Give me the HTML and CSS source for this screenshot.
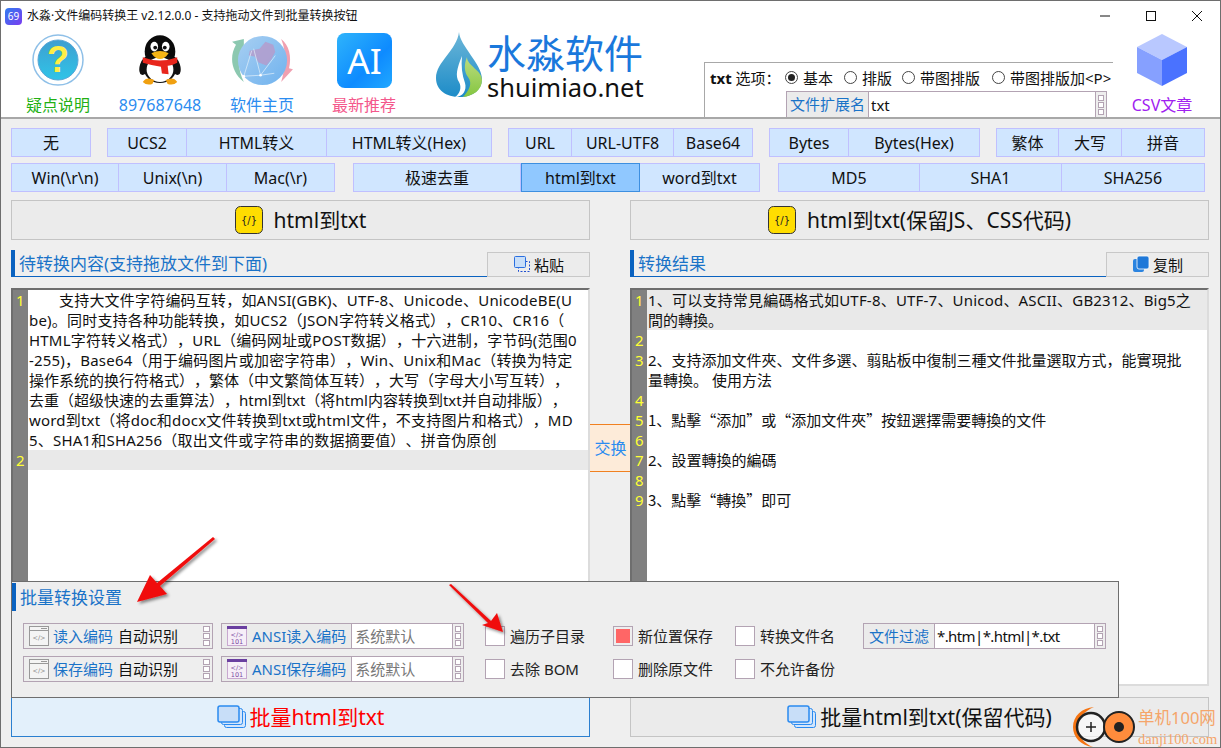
FILE: index.html
```html
<!DOCTYPE html>
<html lang="zh-CN">
<head>
    <meta charset="UTF-8">
    <title>水淼·文件编码转换王</title>
    <link rel="stylesheet" href="styles.css">
</head>
<body>
<div class="window">
    <div class="titlebar">
        <span class="app-icon">69</span>
        <span class="app-title">水淼·文件编码转换王 v2.12.0.0 - 支持拖动文件到批量转换按钮</span>
        <div class="win-controls">
            <svg width="12" height="12" viewBox="0 0 12 12"><path d="M1 6h10" stroke="#111" fill="none"/></svg>
            <svg width="12" height="12" viewBox="0 0 12 12"><rect x="1.5" y="1.5" width="9" height="9" stroke="#111" fill="none"/></svg>
            <svg width="12" height="12" viewBox="0 0 12 12"><path d="M1 1l10 10M11 1L1 11" stroke="#111" fill="none"/></svg>
        </div>
    </div>

    <div class="header">
        <div class="tool">
            <div class="tool-icon">
                <svg width="52" height="52" viewBox="0 0 52 52">
                    <defs><linearGradient id="qBlue" x1="0" y1="0" x2="0" y2="1"><stop offset="0" stop-color="#3f9fd0"/><stop offset="1" stop-color="#2fc4e8"/></linearGradient></defs>
                    <circle cx="26" cy="26" r="25" fill="#fff" stroke="#8fc0e8" stroke-width="1.5"/>
                    <circle cx="26" cy="26" r="20" fill="url(#qBlue)" stroke="#5aa6d8"/>
                    <text x="26" y="38" class="q-mark">?</text>
                </svg>
            </div>
            <span class="tool-label green">疑点说明</span>
        </div>
        <div class="tool">
            <div class="tool-icon">
                <svg width="44" height="52" viewBox="0 0 46 54">
                    <ellipse cx="7" cy="33" rx="5" ry="10" fill="#111" transform="rotate(18 7 33)"/>
                    <ellipse cx="39" cy="33" rx="5" ry="10" fill="#111" transform="rotate(-18 39 33)"/>
                    <ellipse cx="23" cy="18" rx="16" ry="17" fill="#0a0a0a"/>
                    <ellipse cx="23" cy="36" rx="17" ry="15" fill="#111"/>
                    <ellipse cx="23" cy="37" rx="14" ry="13" fill="#fff"/>
                    <ellipse cx="17" cy="13" rx="4" ry="5" fill="#fff"/>
                    <ellipse cx="29" cy="13" rx="4" ry="5" fill="#fff"/>
                    <circle cx="18" cy="14" r="2" fill="#111"/>
                    <circle cx="28" cy="14" r="2" fill="#111"/>
                    <path d="M14 20q9-5 18 0q-4 6-9 6t-9-6z" fill="#f5b516"/>
                    <path d="M5 24q18 7 36 0l0 6q-6 3-10 3l1 9-7-1-1-7q-9-1-19-4z" fill="#e8261c"/>
                    <path d="M5 50q4-6 12-2l-2 4q-6 2-10-2zM41 50q-4-6-12-2l2 4q6 2 10-2z" fill="#f0a010"/>
                </svg>
            </div>
            <span class="tool-label blue">897687648</span>
        </div>
        <div class="tool">
            <div class="tool-icon">
                <svg width="65" height="55" viewBox="0 0 66 56">
                    <defs><linearGradient id="globe" x1="0" y1="0" x2="1" y2="1"><stop offset="0" stop-color="#a8cff2"/><stop offset="1" stop-color="#6fb2ee"/></linearGradient></defs>
                    <path d="M14 6L2 9l4 3C-1 24 1 40 14 50 8 38 7 24 14 13z" fill="#8cc8b0"/>
                    <path d="M52 6c8 6 11 18 8 30l4 1-12 13c4-14 6-30 0-44z" fill="#f0a0b0"/>
                    <circle cx="33" cy="28" r="25" fill="url(#globe)"/>
                    <path d="M20 18l10-2 6-7 8 3 2 7-4 8-5 6-8-3-4-6-6-1z" fill="#b49ccc" opacity=".85"/>
                    <path d="M14 44l17-1 14-2M31 43l15-20M14 44l8-26M31 43L24 16" stroke="#e4f0fb" fill="none" stroke-width=".7"/>
                    <circle cx="14" cy="44" r="1.3" fill="#fff"/><circle cx="31" cy="43" r="1.3" fill="#fff"/>
                </svg>
            </div>
            <span class="tool-label blue">软件主页</span>
        </div>
        <div class="tool">
            <div class="tool-icon">
                <svg width="55" height="55" viewBox="0 0 56 56">
                    <defs><linearGradient id="aiTile" x1="0" y1="0" x2="1" y2="1"><stop offset="0" stop-color="#2fb4fb"/><stop offset=".6" stop-color="#0e8bff"/><stop offset="1" stop-color="#21a8ff"/></linearGradient></defs>
                    <rect width="56" height="56" rx="8" fill="url(#aiTile)"/>
                    <text x="28" y="42" class="ai-mark">AI</text>
                </svg>
            </div>
            <span class="tool-label pink">最新推荐</span>
        </div>

        <div class="logo">
            <svg width="48" height="66" viewBox="0 0 48 66">
                <defs>
                    <linearGradient id="dropBlue" x1="0" y1="0" x2="0" y2="1"><stop offset="0" stop-color="#6cb6d8"/><stop offset="1" stop-color="#1d8cc8"/></linearGradient>
                    <linearGradient id="dropGreen" x1="0" y1="0" x2="0" y2="1"><stop offset="0" stop-color="#bcdc80"/><stop offset="1" stop-color="#84c640"/></linearGradient>
                </defs>
                <path d="M24 0C25 14 47 32 47 47C47 58 37 65 25 65C11 65 1 58 1 46C1 30 22 18 24 0Z" fill="url(#dropBlue)"/>
                <path d="M32 25C32 34 47 38 47 48C47 58 38 64 28 65C34 58 38 52 33 45C29 40 29 32 32 25Z" fill="url(#dropGreen)"/>
                <path d="M27 24C22 36 20 44 24 50C27 55 25 62 20 65C28 65 32 58 30 51C27 43 26 34 27 24Z" fill="#fff"/>
            </svg>
            <div class="logo-text">
                <span class="logo-cn">水淼软件</span>
                <span class="logo-en">shuimiao.net</span>
            </div>
        </div>

        <div class="options">
            <div class="options-row">
                <span class="options-title"><b>txt</b> 选项：</span>
                <label class="radio opt-basic"><span class="dot on"></span>基本</label>
                <label class="radio opt-layout"><span class="dot"></span>排版</label>
                <label class="radio opt-image"><span class="dot"></span>带图排版</label>
                <label class="radio"><span class="dot"></span>带图排版加&lt;P&gt;</label>
            </div>
            <div class="field ext-field">
                <span class="field-label">文件扩展名</span>
                <span class="field-input">txt</span>
                <span class="spin"><i></i><i></i><i></i></span>
            </div>
        </div>

        <div class="tool tool-csv">
            <div class="tool-icon">
                <svg width="52" height="54" viewBox="0 0 52 54">
                    <polygon points="26,1 51,14 26,27 1,14" fill="#b9c8ff"/>
                    <polygon points="1,14 26,27 26,53 1,40" fill="#86a0ff"/>
                    <polygon points="51,14 26,27 26,53 51,40" fill="#4a72ff"/>
                </svg>
            </div>
            <span class="tool-label purple">CSV文章</span>
        </div>
    </div>

    <div class="toolbar">
        <div class="tool-row row-one">
            <div class="seg"><button class="w80">无</button></div>
            <div class="seg"><button class="w80">UCS2</button><button class="w140">HTML转义</button><button class="w165">HTML转义(Hex)</button></div>
            <div class="seg"><button class="w64">URL</button><button class="w102">URL-UTF8</button><button class="w79">Base64</button></div>
            <div class="seg"><button class="w80">Bytes</button><button class="w131">Bytes(Hex)</button></div>
            <div class="seg"><button class="w63">繁体</button><button class="w63">大写</button><button class="w83">拼音</button></div>
        </div>
        <div class="tool-row row-two">
            <div class="seg"><button class="w108">Win(\r\n)</button><button class="w108">Unix(\n)</button><button class="w108">Mac(\r)</button></div>
            <div class="seg"><button class="w168">极速去重</button><button class="w119 active">html到txt</button><button class="w120">word到txt</button></div>
            <div class="seg"><button class="w142">MD5</button><button class="w142">SHA1</button><button class="w143">SHA256</button></div>
        </div>
    </div>

    <div class="main">
        <div class="pane">
            <div class="big-btn">
                <svg class="code-icon" width="28" height="28" viewBox="0 0 28 28"><rect x=".5" y=".5" width="27" height="27" rx="5" fill="#ffdd00" stroke="#333"/><text x="14" y="18" class="code-mark">{/}</text></svg>
                html到txt
            </div>
            <div class="pane-head">
                <span class="pane-title">待转换内容(支持拖放文件到下面)</span>
                <div class="small-btn">
                    <svg width="18" height="18" viewBox="0 0 18 18"><rect x="5.5" y="6.5" width="11" height="10" fill="none" stroke="#2050d0" stroke-dasharray="2 1.5"/><rect x="1.5" y="1.5" width="11" height="11" rx="1" fill="#c8def8" stroke="#2a6fe0"/></svg>
                    粘贴
                </div>
            </div>
            <div class="editor">
                <div class="row">
                    <span class="num">1</span>
                    <div class="txt">
                        <span class="indent wide">支持大文件字符编码互转，如ANSI(GBK)、UTF-8、Unicode、UnicodeBE(U</span>
                        <span class="wide">be)。同时支持各种功能转换，如UCS2（JSON字符转义格式），CR10、CR16（</span>
                        <span class="wide">HTML字符转义格式），URL（编码网址或POST数据），十六进制，字节码(范围0</span>
                        <span class="wide">-255)，Base64（用于编码图片或加密字符串），Win、Unix和Mac（转换为特定</span>
                        <span>操作系统的换行符格式），繁体（中文繁简体互转），大写（字母大小写互转），</span>
                        <span>去重（超级快速的去重算法），html到txt（将html内容转换到txt并自动排版），</span>
                        <span class="wide">word到txt（将doc和docx文件转换到txt或html文件，不支持图片和格式），MD</span>
                        <span class="wide">5、SHA1和SHA256（取出文件或字符串的数据摘要值）、拼音伪原创</span>
                    </div>
                </div>
                <div class="row current"><span class="num">2</span><div class="txt"><span>&nbsp;</span></div></div>
                <div class="row fill"><span class="num"></span><div class="txt"></div></div>
            </div>
            <div class="batch-btn primary">
                <svg class="stack-icon" width="30" height="24" viewBox="0 0 30 24"><rect x="7.5" y="6.5" width="21" height="16" rx="2" fill="#d4e6fb" stroke="#2a8af0"/><rect x="4.5" y="3.5" width="21" height="16" rx="2" fill="#d4e6fb" stroke="#2a8af0"/><rect x="1" y="1" width="21" height="16" rx="2" fill="#c8def8" stroke="#2a8af0" stroke-width="1.5"/></svg>
                批量html到txt
            </div>
        </div>

        <div class="mid"><div class="swap">交换</div></div>

        <div class="pane">
            <div class="big-btn">
                <svg class="code-icon" width="28" height="28" viewBox="0 0 28 28"><rect x=".5" y=".5" width="27" height="27" rx="5" fill="#ffdd00" stroke="#333"/><text x="14" y="18" class="code-mark">{/}</text></svg>
                html到txt(保留JS、CSS代码)
            </div>
            <div class="pane-head">
                <span class="pane-title">转换结果</span>
                <div class="small-btn">
                    <svg width="18" height="18" viewBox="0 0 18 18"><rect x="1" y="4" width="11" height="13" rx="2" fill="#2b84e0"/><rect x="5" y="1" width="12" height="13" rx="2" fill="#1f78d8" stroke="#fff" stroke-width=".8"/></svg>
                    复制
                </div>
            </div>
            <div class="editor">
                <div class="row current">
                    <span class="num">1</span>
                    <div class="txt">
                        <span class="wide">1、可以支持常見編碼格式如UTF-8、UTF-7、Unicod、ASCII、GB2312、Big5之</span>
                        <span>間的轉換。</span>
                    </div>
                </div>
                <div class="row"><span class="num">2</span><div class="txt"><span>&nbsp;</span></div></div>
                <div class="row">
                    <span class="num">3</span>
                    <div class="txt">
                        <span>2、支持添加文件夾、文件多選、翦貼板中復制三種文件批量選取方式，能實現批</span>
                        <span>量轉換。 使用方法</span>
                    </div>
                </div>
                <div class="row"><span class="num">4</span><div class="txt"><span>&nbsp;</span></div></div>
                <div class="row"><span class="num">5</span><div class="txt"><span class="han">1、點擊“添加”或“添加文件夾”按鈕選擇需要轉換的文件</span></div></div>
                <div class="row"><span class="num">6</span><div class="txt"><span>&nbsp;</span></div></div>
                <div class="row"><span class="num">7</span><div class="txt"><span>2、設置轉換的編碼</span></div></div>
                <div class="row"><span class="num">8</span><div class="txt"><span>&nbsp;</span></div></div>
                <div class="row"><span class="num">9</span><div class="txt"><span class="han">3、點擊“轉換”即可</span></div></div>
                <div class="row fill"><span class="num"></span><div class="txt"></div></div>
            </div>
            <div class="batch-btn">
                <svg class="stack-icon" width="30" height="24" viewBox="0 0 30 24"><rect x="7.5" y="6.5" width="21" height="16" rx="2" fill="#d4e6fb" stroke="#2a8af0"/><rect x="4.5" y="3.5" width="21" height="16" rx="2" fill="#d4e6fb" stroke="#2a8af0"/><rect x="1" y="1" width="21" height="16" rx="2" fill="#c8def8" stroke="#2a8af0" stroke-width="1.5"/></svg>
                批量html到txt(保留代码)
            </div>
        </div>
    </div>

    <!-- floats over the two editors -->
    <div class="batch-panel">
        <div class="batch-title">批量转换设置</div>
        <div class="batch-grid">
            <div class="field enc">
                <svg width="20" height="20" viewBox="0 0 20 20"><rect x=".5" y=".5" width="19" height="19" fill="#f4f4f4" stroke="#999"/><path d="M1 4.5h18M12 2.5h6" stroke="#999" fill="none"/><text x="10" y="14" class="mini-code grey">&lt;/&gt;</text></svg>
                <span class="enc-label">读入编码</span><span class="enc-value">自动识别</span>
                <span class="spin"><i></i><i></i><i></i></span>
            </div>
            <div class="field ansi">
                <span class="field-label">
                    <svg width="20" height="20" viewBox="0 0 20 20"><rect x=".5" y=".5" width="19" height="19" fill="#f6eef8" stroke="#c8a8d0"/><rect width="20" height="3" fill="#6a3fa0"/><text x="10" y="10.5" class="mini-code purple-text">&lt;/&gt;</text><text x="10" y="17.5" class="mini-code purple-text">101</text></svg>
                    ANSI读入编码
                </span>
                <span class="field-input grey-text">系统默认</span>
                <span class="spin"><i></i><i></i><i></i></span>
            </div>
            <label class="check"><span class="box"></span>遍历子目录</label>
            <label class="check"><span class="box on"></span>新位置保存</label>
            <label class="check"><span class="box"></span>转换文件名</label>
            <div class="field filter">
                <span class="field-label">文件过滤</span>
                <span class="field-input filter-value">*.htm|*.html|*.txt</span>
                <span class="spin"><i></i><i></i><i></i></span>
            </div>
            <div class="field enc">
                <svg width="20" height="20" viewBox="0 0 20 20"><rect x=".5" y=".5" width="19" height="19" fill="#f4f4f4" stroke="#999"/><path d="M1 4.5h18M12 2.5h6" stroke="#999" fill="none"/><text x="10" y="14" class="mini-code grey">&lt;/&gt;</text></svg>
                <span class="enc-label">保存编码</span><span class="enc-value">自动识别</span>
                <span class="spin"><i></i><i></i><i></i></span>
            </div>
            <div class="field ansi">
                <span class="field-label">
                    <svg width="20" height="20" viewBox="0 0 20 20"><rect x=".5" y=".5" width="19" height="19" fill="#f6eef8" stroke="#c8a8d0"/><rect width="20" height="3" fill="#6a3fa0"/><text x="10" y="10.5" class="mini-code purple-text">&lt;/&gt;</text><text x="10" y="17.5" class="mini-code purple-text">101</text></svg>
                    ANSI保存编码
                </span>
                <span class="field-input grey-text">系统默认</span>
                <span class="spin"><i></i><i></i><i></i></span>
            </div>
            <label class="check"><span class="box"></span>去除 BOM</label>
            <label class="check"><span class="box"></span>删除原文件</label>
            <label class="check"><span class="box"></span>不允许备份</label>
        </div>
    </div>

    <svg class="arrows" width="1221" height="748" viewBox="0 0 1221 748">
        <defs><filter id="arrowShadow"><feDropShadow dx="2" dy="2" stdDeviation="1.5" flood-color="#000" flood-opacity=".45"/></filter></defs>
        <g fill="#f00c0c" filter="url(#arrowShadow)">
            <path d="M213 537L215 539L160 586L167 594L137 602L150 575L157 583Z"/>
            <path d="M449 585L451 584L491 621L497 613L503 632L482 625L488 623Z"/>
        </g>
    </svg>

    <div class="watermark">
        <svg width="64" height="42" viewBox="0 0 64 42">
            <path d="M22 1C10 2 1 10 1 21c0 10 8 19 20 20 -8-3-15-10-15-20S13 5 22 1z" fill="#f57412"/>
            <circle cx="19" cy="21" r="14" fill="#fff" fill-opacity=".6" stroke="#222" stroke-width="2.5"/>
            <path d="M14 21h10M19 16v10" stroke="#222" stroke-width="1.5"/>
            <circle cx="47" cy="21" r="15" fill="#ff8c3c" stroke="#222" stroke-width="2"/>
            <circle cx="47" cy="21" r="5" fill="#222"/>
        </svg>
        <div class="wm-text">
            <span class="wm-cn">单机100网</span>
            <span class="wm-en">danji100.com</span>
        </div>
    </div>
</div>
</body>
</html>
```

FILE: styles.css
```css
* {
    box-sizing: border-box;
}
html, body {
    margin: 0;
    height: 100%;
    overflow: hidden;
}
body {
    font-family: "Noto Sans", "Noto Sans CJK SC", sans-serif;
    font-size: 15px;
    color: #111;
    text-spacing-trim: space-all;
}
button {
    font: inherit;
}
.window {
    position: relative;
    width: 1221px;
    height: 748px;
    border: 1px solid #6e6e6e;
    background: #efefef;
    overflow: hidden;
}

/* title bar */
.titlebar {
    display: flex;
    align-items: center;
    height: 30px;
    padding-left: 4px;
    background: #fff;
}
.app-icon {
    width: 17px;
    height: 17px;
    border-radius: 4px;
    background: linear-gradient(135deg, #2f7cf0, #7a3cf0);
    color: #fff;
    font-size: 10px;
    line-height: 17px;
    text-align: center;
}
.app-title {
    margin-left: 5px;
    font-size: 12px;
    line-height: 20px;
}
.win-controls {
    display: flex;
    gap: 34px;
    margin-left: auto;
    padding-right: 17px;
}

/* header */
.header {
    display: flex;
    height: 88px;
    padding-left: 6px;
    background: #fff;
    border-bottom: 2px solid #a8a8a8;
}
.tool {
    display: flex;
    flex-direction: column;
    align-items: center;
    width: 102px;
}
.tool-icon {
    display: flex;
    align-items: center;
    justify-content: center;
    height: 58px;
}
.tool-label {
    margin-top: 5px;
    font-size: 16px;
    line-height: 22px;
}
.tool-csv {
    width: 98px;
}
.green { color: #22b014; }
.blue { color: #2b8cf0; }
.pink { color: #f4588c; }
.purple { color: #a020f0; }
.q-mark {
    font: bold 36px "Liberation Sans", sans-serif;
    fill: #ffee44;
    text-anchor: middle;
}
.ai-mark {
    font: 36px "Noto Sans", sans-serif;
    fill: #fff;
    text-anchor: middle;
}
.logo {
    display: flex;
    gap: 4px;
    width: 289px;
    padding: 1px 0 0 20px;
}
.logo-text {
    display: flex;
    flex-direction: column;
}
.logo-cn {
    color: #1a78dc;
    font-size: 39px;
    line-height: 42px;
    white-space: nowrap;
}
.logo-en {
    font-size: 25.5px;
    line-height: 26px;
    color: #111;
}
.options {
    align-self: flex-end;
    width: 409px;
    height: 55px;
    border-top: 1px solid #a8a8a8;
    border-left: 1px solid #a8a8a8;
}
.options-row {
    display: flex;
    align-items: center;
    height: 28px;
    padding: 1px 0 0 5px;
    white-space: nowrap;
}
.options-title {
    width: 75px;
    line-height: 20px;
}
.radio {
    display: flex;
    align-items: center;
    gap: 5px;
    line-height: 20px;
}
.opt-basic { width: 59px; }
.opt-layout { width: 58px; }
.opt-image { width: 90px; }
.dot {
    display: flex;
    align-items: center;
    justify-content: center;
    width: 13px;
    height: 13px;
    border: 1px solid #444;
    border-radius: 50%;
    background: #fff;
}
.dot.on::after {
    content: "";
    width: 7px;
    height: 7px;
    border-radius: 50%;
    background: #222;
}

/* fields */
.field {
    display: flex;
    align-items: stretch;
    height: 26px;
    border: 1px solid #b3a3b3;
    background: #fff;
    line-height: 24px;
}
.field-label {
    display: flex;
    align-items: center;
    gap: 5px;
    padding: 0 5px;
    border-right: 1px solid #b3a3b3;
    background: #ebebeb;
    color: #1a73c8;
    white-space: nowrap;
}
.field-input {
    flex: 1;
    padding-left: 3px;
    white-space: nowrap;
}
.filter-value {
    padding-left: 2px;
    letter-spacing: -.6px;
}
.grey-text {
    color: #777;
}
.spin {
    display: flex;
    flex-direction: column;
    justify-content: center;
    gap: 1px;
    width: 11px;
    padding: 0 2px;
    border-left: 1px solid #b3a3b3;
    background: #eee;
}
.spin i {
    display: block;
    height: 6px;
    border: 1px solid #b3a3b3;
    background: #fff;
}
.ext-field {
    width: 321px;
    height: 26px;
    margin-left: 81px;
    border-bottom: 0;
    line-height: 27px;
}
.ext-field .field-label {
    padding: 0 3px;
}
.ext-field .field-input {
    padding-left: 2px;
}

/* toolbar */
.toolbar {
    padding: 9px 0 0 10px;
}
.tool-row {
    display: flex;
    height: 29px;
}
.row-one { gap: 16px; }
.row-two {
    gap: 18px;
    margin-top: 6px;
}
.seg {
    display: flex;
}
.seg button {
    height: 29px;
    padding: 0;
    border: 1px solid #c0c0ff;
    border-left-width: 0;
    background: #d0e6ff;
    color: #111;
    font-size: 16px;
    line-height: 24px;
}
.seg button:first-child {
    border-left-width: 1px;
}
.seg button.active {
    border-color: #3d8fe0;
    border-left-width: 1px;
    background: #90c8ff;
}
.w63 { width: 63px; }
.w64 { width: 64px; }
.w79 { width: 79px; }
.w80 { width: 80px; }
.w83 { width: 83px; }
.w102 { width: 102px; }
.w108 { width: 108px; }
.w119 { width: 119px; }
.w120 { width: 120px; }
.w131 { width: 131px; }
.w140 { width: 140px; }
.w142 { width: 142px; }
.w143 { width: 143px; }
.w165 { width: 165px; }
.w168 { width: 168px; }

/* panes */
.main {
    display: grid;
    grid-template-columns: 579px 40px 579px;
    margin-top: 8px;
    padding-left: 10px;
}
.pane {
    display: flex;
    flex-direction: column;
}
.big-btn, .batch-btn {
    display: flex;
    align-items: center;
    justify-content: center;
    height: 40px;
    border: 1px solid #c4c4c4;
    background: #ebebeb;
    font-size: 21px;
    line-height: 28px;
    white-space: nowrap;
}
.code-icon {
    margin-right: 11px;
}
.code-mark {
    font: 10px "DejaVu Sans", sans-serif;
    fill: #222;
    text-anchor: middle;
}
.pane-head {
    display: flex;
    height: 27px;
    margin-top: 10px;
}
.pane-title {
    flex: 1;
    padding-left: 4px;
    border-left: 4px solid #0a62c0;
    border-bottom: 1px solid #0a62c0;
    color: #1a73c8;
    font-size: 17px;
    line-height: 27px;
}
.small-btn {
    display: flex;
    align-items: center;
    justify-content: center;
    gap: 3px;
    width: 103px;
    margin-top: 2px;
    padding-bottom: 1px;
    border: 1px solid #c8c8c8;
    background: #ececec;
    font-size: 15px;
}
.editor {
    display: flex;
    flex-direction: column;
    height: 398px;
    margin-top: 11px;
    border: 2px solid #6e6e6e;
    border-right: 2px solid #dcdcdc;
    border-bottom: 2px solid #dcdcdc;
    background: #fff;
}
.row {
    display: flex;
}
.row.fill {
    flex: 1;
}
.num {
    flex: none;
    width: 15px;
    padding-left: 3px;
    background: #808080;
    color: #ffff33;
    font-size: 15px;
    line-height: 20px;
}
.txt {
    flex: 1;
    padding-left: 1px;
    font-size: 15px;
    line-height: 20px;
}
.row.current .txt {
    background: #e9e9e9;
}
.txt span {
    display: block;
    white-space: nowrap;
}
.txt .indent {
    padding-left: 30px;
}
.txt .wide {
    letter-spacing: .2px;
}
.txt .han {
    font-family: "Noto Sans CJK SC", sans-serif;
}
.batch-btn {
    margin-top: 11px;
}
.batch-btn.primary {
    border-color: #2a7fd0;
    background: #e3f0fb;
    color: #f00;
}
.stack-icon {
    margin-right: 3px;
}
.mid {
    display: flex;
    flex-direction: column;
}
.swap {
    width: 41px;
    height: 48px;
    margin-top: 224px;
    border-top: 1px solid #f08020;
    border-bottom: 1px solid #f08020;
    background: #fdebd9;
    color: #2b8cf0;
    font-size: 16px;
    line-height: 46px;
    text-align: center;
}

/* batch settings, sits on top of the editors */
.batch-panel {
    position: absolute;
    left: 10px;
    top: 580px;
    width: 1108px;
    height: 117px;
    border: 1px solid #6e6e6e;
    background: #eee;
}
.batch-title {
    height: 28px;
    margin-top: 1px;
    padding-left: 4px;
    border-left: 4px solid #0a62c0;
    color: #1a73c8;
    font-size: 17px;
    line-height: 30px;
}
.batch-grid {
    display: grid;
    grid-template-columns: 198px 264px 128px 122px 128px 243px;
    grid-template-rows: 26px 26px;
    row-gap: 7px;
    margin-top: 12px;
    padding-left: 11px;
}
.enc {
    width: 190px;
    background: #eee;
    align-items: center;
    padding-left: 5px;
}
.enc-label {
    margin-left: 4px;
    color: #1a73c8;
}
.enc-value {
    margin-left: 5px;
    flex: 1;
}
.enc .spin {
    align-self: stretch;
    border-left: 0;
}
.ansi {
    width: 243px;
}
.mini-code {
    font: 6.5px "DejaVu Sans", sans-serif;
    text-anchor: middle;
}
.mini-code.grey { fill: #888; }
.mini-code.purple-text { fill: #7a4aa0; }
.check {
    display: flex;
    align-items: center;
    gap: 5px;
    color: #222;
    line-height: 20px;
}
.box {
    width: 20px;
    height: 20px;
    border: 1px solid #b3a3b3;
    background: #fff;
}
.box.on {
    padding: 2px;
    background: #ff6666 content-box;
}
.filter {
    width: 243px;
}
.arrows {
    position: absolute;
    left: -1px;
    top: -1px;
    pointer-events: none;
}
.watermark {
    position: absolute;
    left: 1071px;
    top: 705px;
    display: flex;
    gap: 2px;
}
.wm-text {
    display: flex;
    flex-direction: column;
    white-space: nowrap;
}
.wm-cn {
    color: #f5a56a;
    font-size: 16.5px;
    line-height: 24px;
}
.wm-en {
    color: #f5a56a;
    font-family: "Liberation Serif", serif;
    font-size: 14.5px;
    line-height: 18px;
}
```
